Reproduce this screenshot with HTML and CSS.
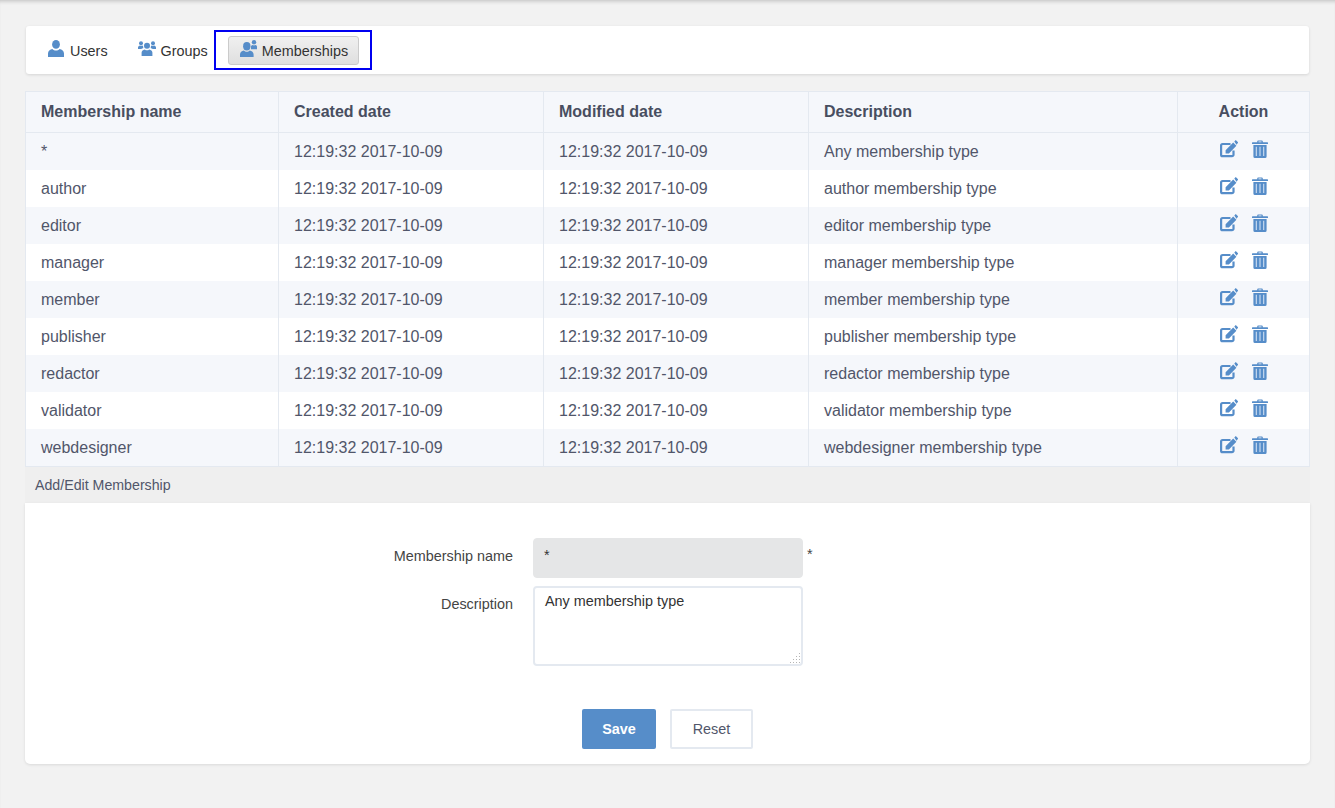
FILE: index.html
```html
<!DOCTYPE html>
<html lang="en">
  <head>
    <meta charset="UTF-8" />
    <meta name="viewport" content="width=device-width, initial-scale=1.0" />
    <title>Memberships</title>
    <link rel="stylesheet" href="styles.css">
  </head>
  <body>
    <svg class="sprites" width="0" height="0">
      <symbol id="i-edit" viewBox="0 0 18 18">
        <path d="M13.5 10.500v4.200a1.500 1.500 0 0 1-1.500 1.500H2.600a1.500 1.500 0 0 1-1.500-1.500V5.500A1.500 1.500 0 0 1 2.600 4h7.900" fill="none" stroke="currentColor" stroke-width="2.200"/>
        <path d="M13.200 2.600l3.200 3.200-7.500 7.700H5.600v-3.200zM14.300 1.500l1.500-1.500 2.200 2.200v.6l-1.500 1.900z" fill="currentColor"/>
      </symbol>
      <symbol id="i-trash" viewBox="0 0 16 18">
        <path d="M5.200 2.200V1.400A1 1 0 0 1 6.200.4h3.600a1 1 0 0 1 1 1v.8H15.400a.6.6 0 0 1 .6.6v1.200H0V2.800a.6.6 0 0 1 .6-.6zm1.300 0h3V1.600h-3z" fill="currentColor"/>
        <path d="M1.400 5h13.200v11.400a1.500 1.500 0 0 1-1.500 1.500H2.900a1.500 1.500 0 0 1-1.500-1.500z" fill="currentColor"/>
        <path d="M4.300 6.800v9.200M8 6.800v9.200M11.700 6.800v9.200" stroke="#cfe0f2" stroke-width="1.100"/>
      </symbol>
      <symbol id="i-user" viewBox="0 0 16 17">
        <ellipse cx="8" cy="4.400" rx="3.900" ry="4.400" fill="currentColor"/>
        <path d="M0 17v-3.400c0-2.600 2-4 4.400-4.600 1 1 2.200 1.500 3.600 1.500s2.600-.5 3.600-1.500c2.400.6 4.400 2 4.400 4.600V17z" fill="currentColor"/>
      </symbol>
      <symbol id="i-group" viewBox="0 0 18 15">
        <circle cx="9" cy="4.800" r="3" fill="currentColor"/>
        <path d="M3.600 15v-3.400c0-1.800 1.500-2.800 3.200-3.200.7.600 1.300.9 2.200.9s1.500-.3 2.200-.9c1.700.4 3.200 1.400 3.200 3.200V15z" fill="currentColor"/>
        <circle cx="3" cy="2.200" r="2" fill="currentColor"/>
        <path d="M0 8V6.400C0 5.200 1 4.600 2 4.400c.6.400 1.500.400 2.200 0 .3.100.6.300.9.500-.2.900 0 1.600.4 2.200C4.400 7.400 3.700 7.700 3.200 8z" fill="currentColor"/>
        <circle cx="15" cy="2.200" r="2" fill="currentColor"/>
        <path d="M18 8V6.400C18 5.200 17 4.600 16 4.400c-.6.400-1.500.400-2.200 0-.3.100-.6.300-.9.500.2.900 0 1.600-.4 2.200 1 .3 1.700.6 2.300.9z" fill="currentColor"/>
      </symbol>
      <symbol id="i-member" viewBox="0 0 18 17">
        <ellipse cx="6.800" cy="6.200" rx="3.700" ry="4.200" fill="currentColor"/>
        <path d="M0 17v-2.600c0-2.300 1.800-3.500 3.900-4 .8.800 1.800 1.300 2.900 1.300s2.100-.5 2.900-1.300c2.100.5 3.900 1.700 3.900 4V17z" fill="currentColor"/>
        <circle cx="14" cy="2.200" r="2.200" fill="currentColor"/>
        <path d="M11 9.200V6.800c0-1 .8-1.600 1.700-1.800.8.500 1.800.5 2.600 0 .9.200 1.700.8 1.700 1.800v2.400z" fill="currentColor"/>
      </symbol>
    </svg>

    <div class="page">
      <ul class="tabs">
        <li class="tab">
          <svg class="tab-icon icon-user"><use href="#i-user"/></svg>Users
        </li>
        <li class="tab tab-groups">
          <svg class="tab-icon icon-group"><use href="#i-group"/></svg>Groups
        </li>
        <li class="tab-focus">
          <span class="tab-btn">
            <svg class="tab-icon icon-member"><use href="#i-member"/></svg>Memberships
          </span>
        </li>
      </ul>

      <table class="grid">
        <colgroup>
          <col class="col-name">
          <col class="col-date">
          <col class="col-date">
          <col class="col-desc">
          <col class="col-action">
        </colgroup>
        <thead>
          <tr>
            <th>Membership name</th>
            <th>Created date</th>
            <th>Modified date</th>
            <th>Description</th>
            <th class="action">Action</th>
          </tr>
        </thead>
        <tbody>
          <tr>
            <td>*</td>
            <td>12:19:32 2017-10-09</td>
            <td>12:19:32 2017-10-09</td>
            <td>Any membership type</td>
            <td class="action"><svg class="ico-edit"><use href="#i-edit"/></svg><svg class="ico-trash"><use href="#i-trash"/></svg></td>
          </tr>
          <tr>
            <td>author</td>
            <td>12:19:32 2017-10-09</td>
            <td>12:19:32 2017-10-09</td>
            <td>author membership type</td>
            <td class="action"><svg class="ico-edit"><use href="#i-edit"/></svg><svg class="ico-trash"><use href="#i-trash"/></svg></td>
          </tr>
          <tr>
            <td>editor</td>
            <td>12:19:32 2017-10-09</td>
            <td>12:19:32 2017-10-09</td>
            <td>editor membership type</td>
            <td class="action"><svg class="ico-edit"><use href="#i-edit"/></svg><svg class="ico-trash"><use href="#i-trash"/></svg></td>
          </tr>
          <tr>
            <td>manager</td>
            <td>12:19:32 2017-10-09</td>
            <td>12:19:32 2017-10-09</td>
            <td>manager membership type</td>
            <td class="action"><svg class="ico-edit"><use href="#i-edit"/></svg><svg class="ico-trash"><use href="#i-trash"/></svg></td>
          </tr>
          <tr>
            <td>member</td>
            <td>12:19:32 2017-10-09</td>
            <td>12:19:32 2017-10-09</td>
            <td>member membership type</td>
            <td class="action"><svg class="ico-edit"><use href="#i-edit"/></svg><svg class="ico-trash"><use href="#i-trash"/></svg></td>
          </tr>
          <tr>
            <td>publisher</td>
            <td>12:19:32 2017-10-09</td>
            <td>12:19:32 2017-10-09</td>
            <td>publisher membership type</td>
            <td class="action"><svg class="ico-edit"><use href="#i-edit"/></svg><svg class="ico-trash"><use href="#i-trash"/></svg></td>
          </tr>
          <tr>
            <td>redactor</td>
            <td>12:19:32 2017-10-09</td>
            <td>12:19:32 2017-10-09</td>
            <td>redactor membership type</td>
            <td class="action"><svg class="ico-edit"><use href="#i-edit"/></svg><svg class="ico-trash"><use href="#i-trash"/></svg></td>
          </tr>
          <tr>
            <td>validator</td>
            <td>12:19:32 2017-10-09</td>
            <td>12:19:32 2017-10-09</td>
            <td>validator membership type</td>
            <td class="action"><svg class="ico-edit"><use href="#i-edit"/></svg><svg class="ico-trash"><use href="#i-trash"/></svg></td>
          </tr>
          <tr>
            <td>webdesigner</td>
            <td>12:19:32 2017-10-09</td>
            <td>12:19:32 2017-10-09</td>
            <td>webdesigner membership type</td>
            <td class="action"><svg class="ico-edit"><use href="#i-edit"/></svg><svg class="ico-trash"><use href="#i-trash"/></svg></td>
          </tr>
        </tbody>
      </table>

      <div class="edit-title">Add/Edit Membership</div>
      <form class="edit-form">
        <div class="form-row">
          <label class="form-label" for="m-name">Membership name</label>
          <input class="form-name" id="m-name" type="text" value="*" disabled>
          <span class="required">*</span>
        </div>
        <div class="form-row">
          <label class="form-label" for="m-desc">Description</label>
          <div class="desc-wrap">
            <textarea class="form-desc" id="m-desc">Any membership type</textarea>
            <span class="grip"></span>
          </div>
        </div>
        <div class="form-actions">
          <button class="btn btn-save" type="button">Save</button>
          <button class="btn btn-reset" type="button">Reset</button>
        </div>
      </form>
    </div>
  </body>
</html>
```

FILE: styles.css
```css
* {
  box-sizing: border-box;
}

body {
  margin: 0;
  min-height: 100vh;
  background-color: #f2f2f2;
  box-shadow: inset 0 4px 4px -3px rgba(0, 0, 0, 0.22);
  font-family: "Liberation Sans", Arial, sans-serif;
  color: #51566a;
}

.sprites {
  display: none;
}

.page {
  padding: 26px 25px 44px;
}

/* tabs */
.tabs {
  display: flex;
  align-items: center;
  height: 48px;
  margin: 0 1px 17px 1px;
  padding: 0 0 0 22px;
  list-style: none;
  background-color: #fff;
  border-radius: 3px;
  box-shadow: 0 1px 3px rgba(0, 0, 0, 0.12);
  font-size: 14.4px;
  color: #333;
}

.tab {
  display: flex;
  align-items: center;
  margin-top: 1px;
}

.tab-groups {
  margin-left: 30px;
}

.tab-icon {
  color: #568dc9;
}

.icon-user {
  width: 16px;
  height: 17px;
  margin-right: 6px;
  margin-top: -4px;
}

.icon-group {
  width: 18px;
  height: 15px;
  margin-right: 5px;
  margin-top: -4px;
}

.icon-member {
  width: 18px;
  height: 17px;
  margin-right: 4px;
  margin-top: -5px;
}

.tab-focus {
  margin-left: 6px;
  padding: 4px 11px 3px 12px;
  border: 2px solid #0000f0;
}

.tab-btn {
  display: flex;
  align-items: center;
  width: 131px;
  height: 29px;
  padding-left: 11px;
  background: linear-gradient(#f0f0f0, #dfdfdf);
  border: 1px solid #cbcbcb;
  border-radius: 3px;
}

/* table */
.grid {
  width: 1284px;
  table-layout: fixed;
  border-collapse: collapse;
  background-color: #fff;
  font-size: 16px;
}

.col-name {
  width: 253px;
}

.col-date {
  width: 265px;
}

.col-desc {
  width: 369px;
}

.col-action {
  width: 132px;
}

.grid th,
.grid td {
  padding: 0 15px;
  text-align: left;
  border-left: 1px solid #e4e9f0;
  border-right: 1px solid #e4e9f0;
}

.grid th {
  height: 41px;
  background-color: #f5f7fb;
  border-top: 1px solid #e4e9f0;
  border-bottom: 1px solid #e4e9f0;
  font-weight: bold;
  color: #484e60;
}

.grid td {
  height: 37px;
  padding-top: 2px;
}

.grid tbody tr:nth-child(odd) td {
  background-color: #f5f7fb;
}

.grid tbody tr:last-child td {
  height: 38px;
  border-bottom: 1px solid #e4e9f0;
}

.grid .action {
  padding: 0;
  text-align: center;
}

.grid td.action {
  padding-bottom: 4px;
}

.action svg {
  color: #568dc9;
  vertical-align: top;
}

.ico-edit {
  width: 18px;
  height: 18px;
  margin-right: 14px;
}

.ico-trash {
  width: 16px;
  height: 18px;
}

/* form */
.edit-title {
  height: 36px;
  padding: 10px 10px 0;
  background-color: #efefef;
  font-size: 14.2px;
}

.edit-form {
  padding: 35px 0 15px;
  background-color: #fff;
  border-radius: 0 0 5px 5px;
  box-shadow: 0 1px 3px rgba(0, 0, 0, 0.1);
  font-size: 14.4px;
  color: #444;
}

.form-row {
  display: flex;
  align-items: flex-start;
  margin-bottom: 8px;
}

.form-label {
  width: 488px;
  margin-right: 20px;
  padding-top: 10px;
  text-align: right;
}

.form-name,
.form-desc {
  width: 270px;
  padding: 5px 10px;
  font-family: "Liberation Sans", Arial, sans-serif;
  font-size: 14.4px;
  color: #333;
  border-radius: 4px;
}

.form-name {
  height: 40px;
  padding-bottom: 12px;
  background-color: #e5e6e7;
  border: 1px solid #e5e6e7;
  opacity: 1;
}

.desc-wrap {
  position: relative;
  width: 270px;
}

.form-desc {
  display: block;
  height: 80px;
  margin: 0;
  background-color: #fff;
  border: 2px solid #e4e9f0;
  resize: none;
}

/* dots of the textarea resize handle */
.grip {
  position: absolute;
  right: 3px;
  bottom: 3px;
  width: 1px;
  height: 1px;
  background-color: #b5b5b5;
  box-shadow: -3px 0 #b5b5b5, -6px 0 #b5b5b5, -9px 0 #b5b5b5,
    0 -3px #b5b5b5, -3px -3px #b5b5b5, -6px -3px #b5b5b5,
    0 -6px #b5b5b5, -3px -6px #b5b5b5,
    0 -9px #b5b5b5;
}

.required {
  margin-left: 4px;
  padding-top: 8px;
}

.form-actions {
  display: flex;
  justify-content: center;
  gap: 14px;
  margin-top: 43px;
}

.btn {
  height: 40px;
  font-family: "Liberation Sans", Arial, sans-serif;
  font-size: 14.4px;
  border-radius: 2px;
  cursor: pointer;
}

.btn-save {
  width: 74px;
  background-color: #568dc9;
  border: none;
  font-weight: bold;
  color: #fff;
}

.btn-reset {
  width: 83px;
  background-color: #fff;
  border: 2px solid #e4e9f0;
  color: #51566a;
}
```
